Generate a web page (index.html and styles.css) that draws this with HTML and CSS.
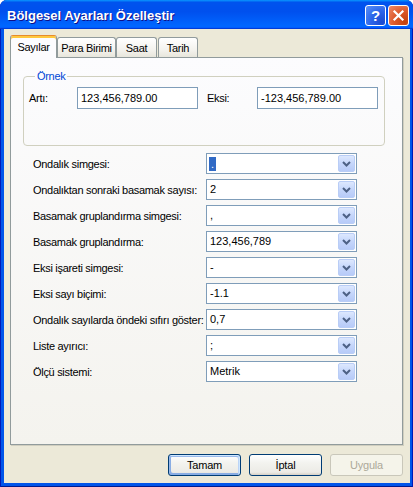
FILE: index.html
```html
<!DOCTYPE html>
<html lang="tr">
<head>
<meta charset="utf-8">
<title>Bölgesel Ayarları Özelleştir</title>
<link rel="stylesheet" href="styles.css">
</head>
<body>
<div class="window">
  <div class="titlebar">
    <span class="title">Bölgesel Ayarları Özelleştir</span>
    <div class="controls">
      <div class="tb help">?</div>
      <div class="tb close">
        <svg width="13" height="13" viewBox="0 0 13 13"><path d="M2.5 2.5 L10.5 10.5 M10.5 2.5 L2.5 10.5" stroke="#fff" stroke-width="2.2" stroke-linecap="square"/></svg>
      </div>
    </div>
  </div>
  <div class="client">
    <div class="tabs">
      <div class="tab active w1">Sayılar</div>
      <div class="tab w2">Para Birimi</div>
      <div class="tab w3">Saat</div>
      <div class="tab w4">Tarih</div>
    </div>
    <div class="panel">
      <fieldset class="sample">
        <legend>Örnek</legend>
        <div class="sample-row">
          <span class="s-label">Artı:</span>
          <div class="textbox">123,456,789.00</div>
          <span class="s-label eksi">Eksi:</span>
          <div class="textbox">-123,456,789.00</div>
        </div>
      </fieldset>
      <div class="settings">
        <span class="lbl">Ondalık simgesi:</span>
        <div class="combo"><span class="val"><span class="sel">.</span></span><span class="dd"><svg width="15" height="15" viewBox="0 0 15 15"><path d="M4 6 L7.5 9.5 L11 6" fill="none" stroke="#4d6185" stroke-width="2"/></svg></span></div>

        <span class="lbl">Ondalıktan sonraki basamak sayısı:</span>
        <div class="combo"><span class="val">2</span><span class="dd"><svg width="15" height="15" viewBox="0 0 15 15"><path d="M4 6 L7.5 9.5 L11 6" fill="none" stroke="#4d6185" stroke-width="2"/></svg></span></div>

        <span class="lbl">Basamak gruplandırma simgesi:</span>
        <div class="combo"><span class="val">,</span><span class="dd"><svg width="15" height="15" viewBox="0 0 15 15"><path d="M4 6 L7.5 9.5 L11 6" fill="none" stroke="#4d6185" stroke-width="2"/></svg></span></div>

        <span class="lbl">Basamak gruplandırma:</span>
        <div class="combo"><span class="val">123,456,789</span><span class="dd"><svg width="15" height="15" viewBox="0 0 15 15"><path d="M4 6 L7.5 9.5 L11 6" fill="none" stroke="#4d6185" stroke-width="2"/></svg></span></div>

        <span class="lbl">Eksi işareti simgesi:</span>
        <div class="combo"><span class="val">-</span><span class="dd"><svg width="15" height="15" viewBox="0 0 15 15"><path d="M4 6 L7.5 9.5 L11 6" fill="none" stroke="#4d6185" stroke-width="2"/></svg></span></div>

        <span class="lbl">Eksi sayı biçimi:</span>
        <div class="combo"><span class="val">-1.1</span><span class="dd"><svg width="15" height="15" viewBox="0 0 15 15"><path d="M4 6 L7.5 9.5 L11 6" fill="none" stroke="#4d6185" stroke-width="2"/></svg></span></div>

        <span class="lbl">Ondalık sayılarda öndeki sıfırı göster:</span>
        <div class="combo"><span class="val">0,7</span><span class="dd"><svg width="15" height="15" viewBox="0 0 15 15"><path d="M4 6 L7.5 9.5 L11 6" fill="none" stroke="#4d6185" stroke-width="2"/></svg></span></div>

        <span class="lbl">Liste ayırıcı:</span>
        <div class="combo"><span class="val">;</span><span class="dd"><svg width="15" height="15" viewBox="0 0 15 15"><path d="M4 6 L7.5 9.5 L11 6" fill="none" stroke="#4d6185" stroke-width="2"/></svg></span></div>

        <span class="lbl">Ölçü sistemi:</span>
        <div class="combo"><span class="val">Metrik</span><span class="dd"><svg width="15" height="15" viewBox="0 0 15 15"><path d="M4 6 L7.5 9.5 L11 6" fill="none" stroke="#4d6185" stroke-width="2"/></svg></span></div>
      </div>
    </div>
    <div class="buttons">
      <div class="btn default">Tamam</div>
      <div class="btn">İptal</div>
      <div class="btn disabled">Uygula</div>
    </div>
  </div>
</div>
</body>
</html>
```

FILE: styles.css
```css
* { box-sizing: border-box; }

body {
  margin: 0;
  background: #ffffff;
  font-family: "Liberation Sans", Arial, sans-serif;
  font-size: 11px;
  color: #000;
}

.window {
  width: 413px;
  height: 487px;
  display: flex;
  flex-direction: column;
  background: #0055ea;
  border-radius: 7px 7px 0 0;
  overflow: hidden;
  box-shadow: inset 1px 0 #0019b8, inset -1px 0 #0019b8, inset 0 -1px #001a8c;
}

.titlebar {
  height: 29px;
  flex: none;
  display: flex;
  align-items: center;
  padding: 0 4px 0 7px;
  background: linear-gradient(180deg, #0997ff 0%, #0053ee 8%, #0050ee 40%, #0066ff 88%, #0066ff 93%, #005bff 95%, #003dd7 96%, #003dd7 100%);
}

.title {
  flex: 1;
  color: #fff;
  font-weight: bold;
  font-size: 13px;
  text-shadow: 1px 1px #0f1089;
  margin-top: 1px;
}

.controls {
  display: flex;
  gap: 2px;
  margin-top: 2px;
}

.tb {
  width: 21px;
  height: 21px;
  border: 1px solid #fff;
  border-radius: 3px;
  display: flex;
  align-items: center;
  justify-content: center;
}

.help {
  background: radial-gradient(circle at 85% 85%, #1a4ad0 0%, #2c66ea 50%, #5b92f8 100%);
  color: #fff;
  font-weight: bold;
  font-size: 15px;
}

.close {
  background: radial-gradient(circle at 85% 85%, #c2410f 0%, #dd5a2c 50%, #ef8a68 100%);
}

.client {
  flex: 1;
  margin: 0 3px 4px 4px;
  background: #ece9d8;
  padding: 6px 7px 0 6px;
  display: flex;
  flex-direction: column;
}

.tabs {
  display: flex;
  height: 22px;
  align-items: flex-end;
  position: relative;
  z-index: 1;
}

.tab {
  height: 20px;
  border: 1px solid #919b9c;
  border-bottom: none;
  border-radius: 3px 3px 0 0;
  background: linear-gradient(180deg, #ffffff 0%, #f4f3ee 60%, #e8e6dc 100%);
  display: flex;
  align-items: center;
  justify-content: center;
  padding-top: 1px;
  letter-spacing: -0.3px;
  white-space: nowrap;
}

.tab.active {
  height: 23px;
  margin-bottom: -1px;
  background: #fcfcfe;
  border-top: 1px solid #e68b2c;
  box-shadow: inset 0 2px #ffc83c;
  padding-top: 0;
}

.w1 { width: 47px; }
.w2 { width: 59px; }
.w3 { width: 41px; margin-right: 1px; }
.w4 { width: 40px; }

.panel {
  height: 388px;
  flex: none;
  border: 1px solid #919b9c;
  background: linear-gradient(180deg, #fcfcfe 0%, #f4f3ee 100%);
  box-shadow: 1px 1px 0 #d0cebf;
  padding: 12px 0 0 12px;
}

.sample {
  margin: 0;
  width: 362px;
  border: 1px solid #d0d0bf;
  border-radius: 4px;
  padding: 0 0 36px 5px;
}

.sample legend {
  color: #0046d5;
  padding: 0 2px;
  margin-left: 6px;
  line-height: 13px;
  letter-spacing: -0.3px;
}

.sample-row {
  display: flex;
  align-items: center;
  margin-top: 4px;
  height: 22px;
}

.s-label { width: 48px; letter-spacing: -0.3px; }
.s-label.eksi { width: 50px; margin-left: 9px; }

.textbox {
  width: 121px;
  height: 22px;
  border: 1px solid #7f9db9;
  background: #fff;
  padding-left: 3px;
  line-height: 20px;
}

.settings {
  display: grid;
  grid-template-columns: 173px 151px;
  grid-auto-rows: 21px;
  row-gap: 5px;
  align-items: center;
  margin: 7px 0 0 10px;
}

.lbl {
  letter-spacing: -0.3px;
  white-space: nowrap;
}

.combo {
  height: 21px;
  border: 1px solid #7f9db9;
  background: #fff;
  display: flex;
}

.val {
  flex: 1;
  padding-left: 3px;
  line-height: 19px;
  white-space: nowrap;
}

.sel {
  display: inline-block;
  background: #316ac5;
  color: #fff;
  line-height: 14px;
  padding: 0 2px;
  margin-left: -1px;
  vertical-align: middle;
}

.dd {
  width: 17px;
  height: 17px;
  margin: 1px;
  border: 1px solid #b9cdf6;
  border-radius: 2px;
  background: linear-gradient(180deg, #dde8fe 0%, #c5d6fb 50%, #b7cbf8 100%);
  display: flex;
  align-items: center;
  justify-content: center;
}

.buttons {
  display: flex;
  justify-content: flex-end;
  gap: 8px;
  margin-top: 9px;
}

.btn {
  width: 73px;
  height: 22px;
  border: 1px solid #003c74;
  border-radius: 3px;
  background: linear-gradient(180deg, #ffffff 0%, #f3f3ef 40%, #ecebe6 86%, #d6d0c5 100%);
  display: flex;
  align-items: center;
  justify-content: center;
  letter-spacing: -0.2px;
}

.btn.default {
  box-shadow: inset -1px 1px #cee7ff, inset 1px 2px #98b8ea, inset -2px 2px #bcd4f6, inset 1px -1px #89ade4, inset 2px -2px #89ade4;
}

.btn.disabled {
  border-color: #c9c7ba;
  background: #f5f4ea;
  color: #aca899;
}
```
